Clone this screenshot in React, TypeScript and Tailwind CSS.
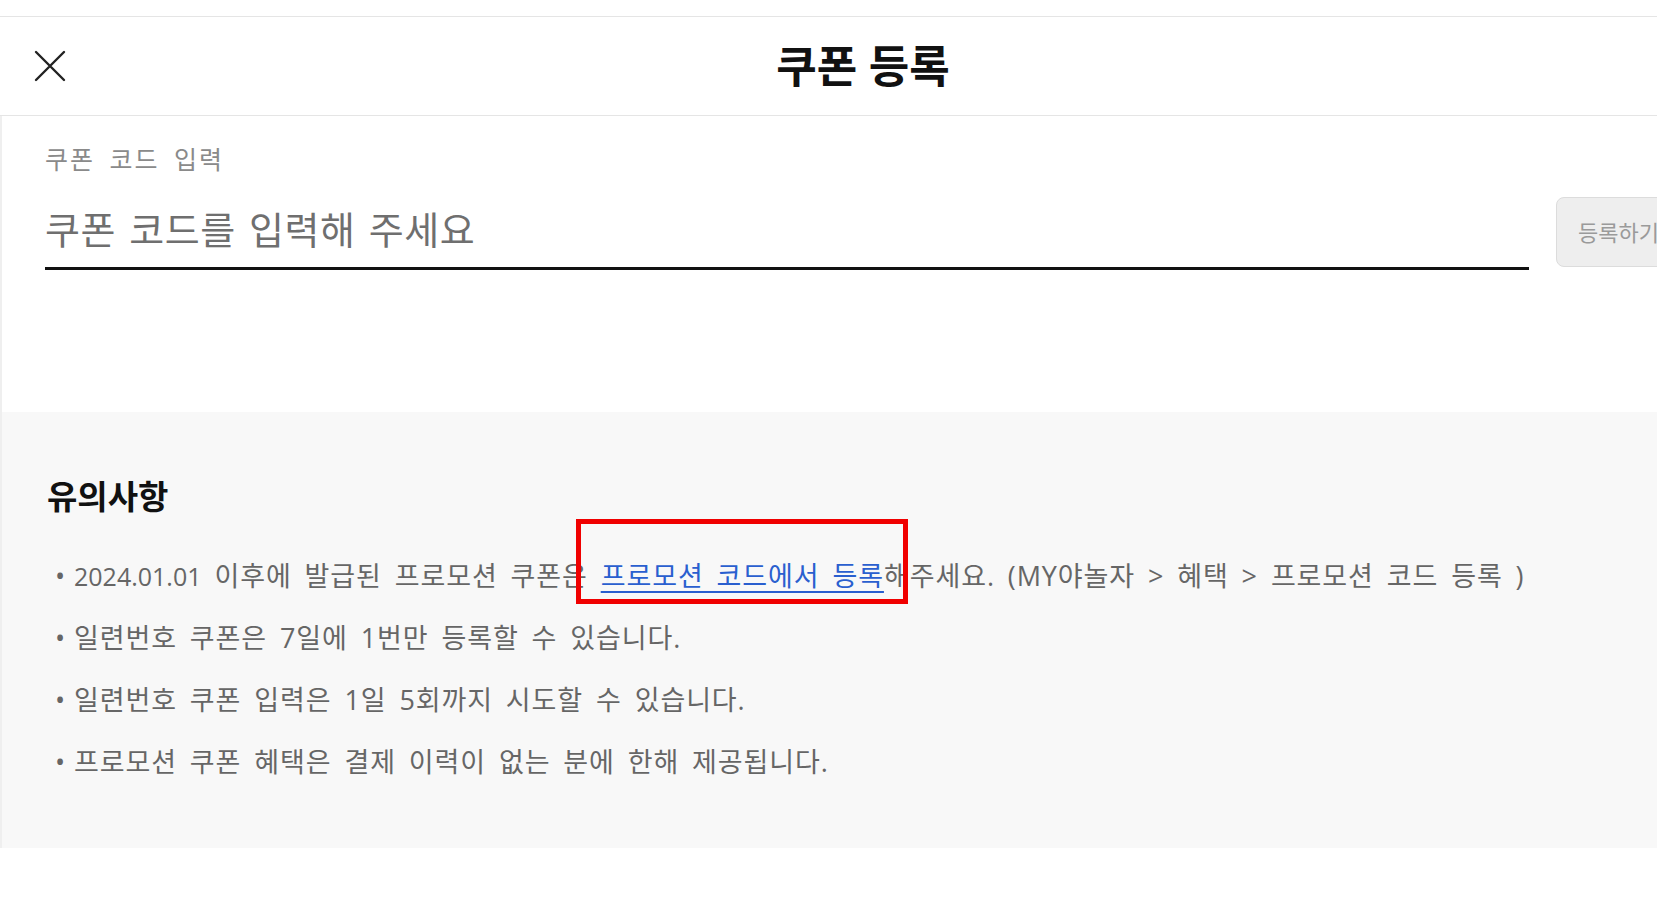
const FONT = { fontFamily: '"Open Sans", "Noto Sans CJK KR", sans-serif' }

const NOTICES = [
  '일련번호 쿠폰은 7일에 1번만 등록할 수 있습니다.',
  '일련번호 쿠폰 입력은 1일 5회까지 시도할 수 있습니다.',
  '프로모션 쿠폰 혜택은 결제 이력이 없는 분에 한해 제공됩니다.',
]

function CloseIcon() {
  return (
    <svg width="32" height="32" viewBox="0 0 32 32" fill="none" stroke="#222" strokeWidth="2.4" strokeLinecap="round">
      <path d="M2 2 L30 30 M30 2 L2 30" />
    </svg>
  )
}

export default function App() {
  return (
    <div className="w-full h-screen overflow-hidden bg-white" style={FONT}>
      <div className="w-[1726px] pt-4">
        <header className="relative h-[100px] border-y border-[#e5e5e5] flex items-center justify-center">
          <button className="absolute left-[34px] top-1/2 -translate-y-1/2">
            <CloseIcon />
          </button>
          <h1 className="text-[44px] font-bold text-[#111] leading-none">쿠폰 등록</h1>
        </header>

        <div className="border-l-2 border-[#efefef]">
          <section className="pl-[43px] pr-[45px] pt-[28px] pb-[142px]">
            <p className="text-[25px] leading-[30px] text-[#8a8a8a] tracking-[2px] [word-spacing:6px]">
              쿠폰 코드 입력
            </p>
            <div className="mt-4 flex items-end gap-[27px]">
              <input
                className="flex-1 h-[80px] border-b-[3px] border-[#111] outline-none bg-transparent text-[38px] tracking-[0.5px] [word-spacing:3px] text-[#333] placeholder:text-[#6f6f6f]"
                placeholder="쿠폰 코드를 입력해 주세요"
              />
              <button className="mb-[3px] w-[125px] h-[70px] shrink-0 rounded-lg border border-[#dcdcdc] bg-[#eeeeee] text-[22px] text-[#9a9a9a]">
                등록하기
              </button>
            </div>
          </section>

          <section className="bg-[#f8f8f8] pl-[45px] pt-[65px] pb-[55px]">
            <h2 className="text-[33px] leading-[40px] font-bold text-[#111]">유의사항</h2>
            <ul className="mt-[28px] ml-[8px] text-[27px] leading-[62px] text-[#666] tracking-[0.9px] [word-spacing:5px]">
              <li className="flex">
                <span className="w-[19px] shrink-0">•</span>
                <span>
                  <span className="text-[25px] tracking-normal">2024.01.01</span> 이후에 발급된 프로모션 쿠폰은{' '}
                  <span className="relative">
                    <a href="#" className="text-[#2a5fcf] underline underline-offset-[5px]">
                      프로모션 코드에서 등록
                    </a>
                    <span className="absolute -left-[25px] -right-[24px] -top-[38px] -bottom-[10px] border-[5px] border-[#f00000] pointer-events-none" />
                  </span>
                  해주세요. (MY야놀자 &gt; 혜택 &gt; 프로모션 코드 등록 )
                </span>
              </li>
              {NOTICES.map((n) => (
                <li key={n} className="flex">
                  <span className="w-[19px] shrink-0">•</span>
                  <span>{n}</span>
                </li>
              ))}
            </ul>
          </section>
        </div>
      </div>
    </div>
  )
}
